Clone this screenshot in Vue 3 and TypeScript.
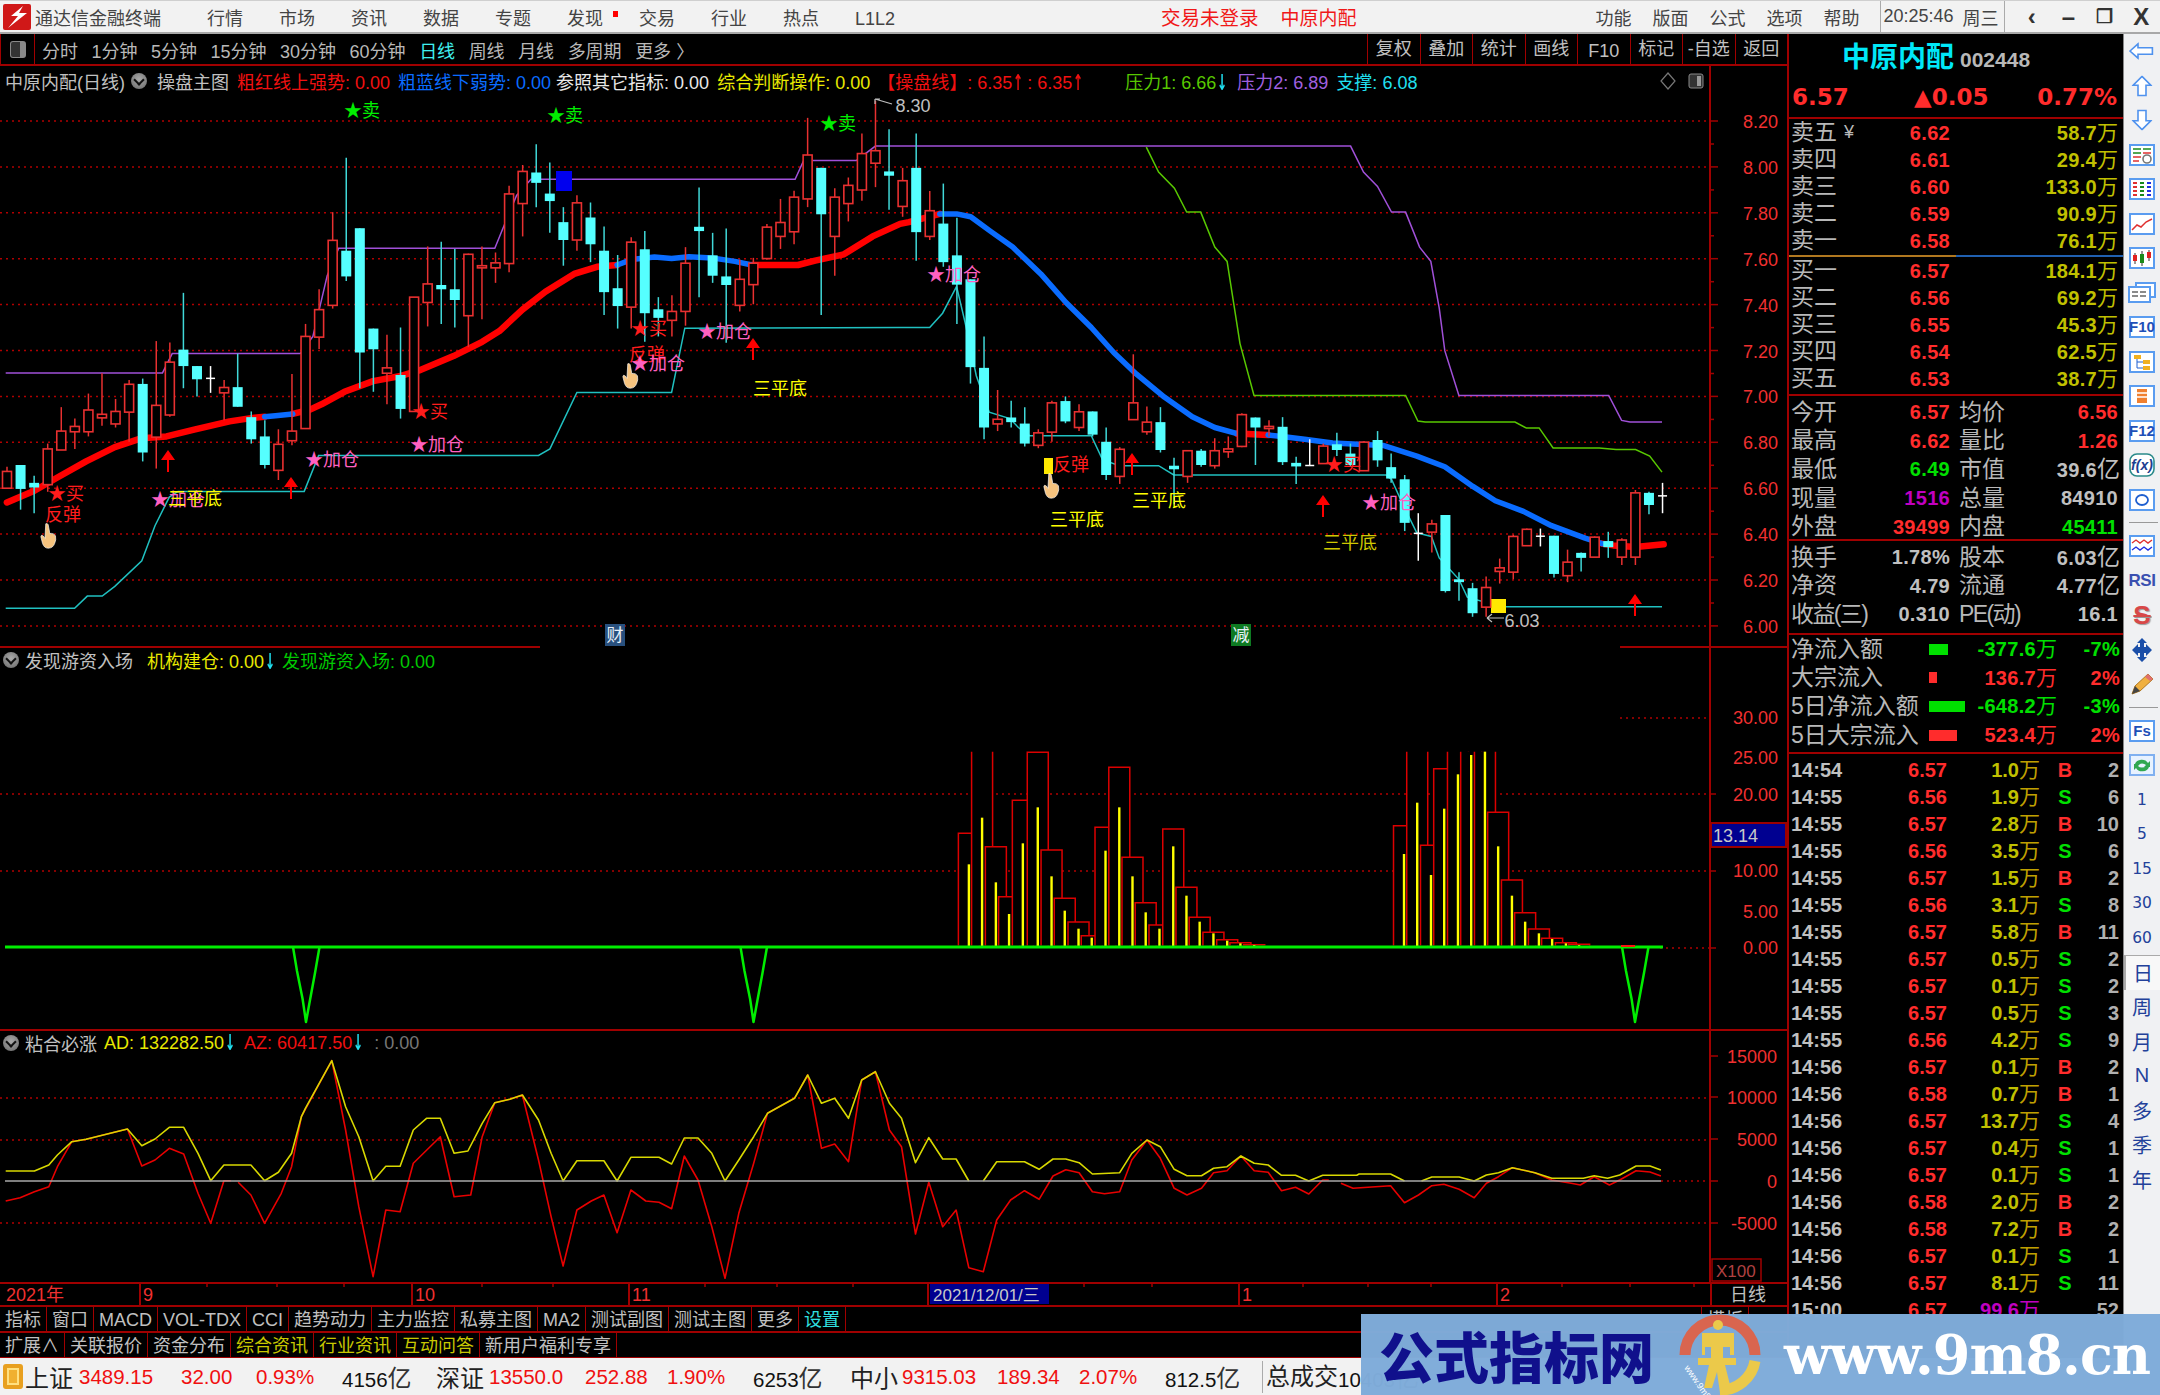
<script setup lang="ts">
// display coordinates read off two enlarged crops of the price chart
const pts6 = (...n: number[]) => pairs(n, (x, y) => [x / 1.742, 90 + y / 2.8])
const pts7 = (...n: number[]) => pairs(n, (x, y) => [850 + x / 1.782, 90 + y / 2.8])
const ptsA = (...n: number[]) => pairs(n, (x, y) => [x / 1.742, 1020 + y / 3])
const ptsB = (...n: number[]) => pairs(n, (x, y) => [850 + x / 1.65, 1020 + y / 3])

function pairs(n: number[], f: (x: number, y: number) => number[]) {
  const out: string[] = []
  for (let i = 0; i < n.length; i += 2) {
    const [x, y] = f(n[i], n[i + 1])
    out.push(`${x.toFixed(1)},${y.toFixed(1)}`)
  }
  return out.join(' ')
}

// kind (0 up, 1 down, 2 doji), high, body top, body bottom, low
const rawCandles = [
  [0,1055,1068,1115,1115],[1,1050,1050,1117,1175],[1,1080,1100,1113,1185],[0,990,1005,1105,1125],[0,888,955,1008,1008],
  [0,920,942,957,1005],[0,850,896,957,970],[0,793,908,918,940],[0,865,900,935,945],[0,812,824,902,985],
  [1,808,823,1015,1040],[0,703,883,972,1060],[0,707,762,910,915],[1,568,727,773,835],[1,773,773,810,858],
  [2,773,806,809,848],[0,812,833,848,925],[1,738,832,887,887],[1,900,916,978,990],[1,925,970,1050,1060],
  [0,950,992,1065,1092],[0,795,955,982,995],[0,655,690,948,948],[0,558,615,692,725],[0,342,421,603,612],
  [1,190,450,522,535],[1,387,387,735,835],[1,668,668,726,845],[0,685,778,793,880],[1,665,798,893,920],
  [0,580,580,900,900],[0,438,543,595,662],[1,425,546,558,655],[1,445,558,588,665],[0,458,460,632,720],
  [0,438,492,498,642],[0,455,484,498,540],[0,268,291,486,510],[0,210,228,318,410],[1,152,231,260,328],
  [1,203,290,311,400],[1,328,370,420,492],[0,295,316,420,450],[1,315,357,432,482],[1,382,450,566,630],
  [1,462,555,605,668],[0,412,426,608,668],[1,395,446,625,705],[1,580,614,638,690],[0,575,620,645,690],
  [0,440,485,620,660],[1,273,383,395,580],[1,400,463,520,540],[1,388,522,546,708],[0,475,530,603,620],
  [0,470,485,545,600],[0,375,384,472,475],[0,305,371,410,445],[0,282,300,397,432],[0,78,182,305,328],
  [1,218,218,348,630],[0,275,300,410,520],[0,245,267,318,368],[0,122,178,280,310],[0,30,170,205,272],
  [1,110,228,240,335],[0,218,254,326,355],[1,122,218,398,478],[0,283,338,410,420],[1,262,374,482,495],
  [1,358,463,545,655],[1,530,530,776,822],[1,690,778,945,978],[0,840,922,935,955],[1,870,917,930,945],
  [1,888,934,990,998],[0,950,960,995,1003],[0,870,876,958,985],[1,858,871,928,933],[0,880,901,945,955],
  [1,900,900,965,970],[1,945,985,1078,1092],[0,1000,1006,1082,1103],[0,740,876,923,923],[0,886,930,957,965],
  [1,888,930,1008,1015],[1,1030,1052,1062,1160],[0,1010,1010,1082,1100],[1,1005,1010,1050,1055],[0,975,1010,1052,1060],
  [0,970,1005,1013,1030],[0,905,909,998,1000],[1,917,917,945,1050],[0,925,942,948,970],[1,916,943,1042,1050],
  [1,1027,1044,1054,1103],[2,978,1050,1053,1053],[0,990,997,1046,1046],[1,960,992,1008,1025],[1,990,1018,1050,1055],
  [0,983,986,1066,1066],[1,955,980,1037,1055],[1,1018,1056,1088,1100],[1,1078,1090,1212,1235],[2,1185,1240,1244,1318],
  [0,1203,1215,1238,1295],[1,1190,1190,1403,1407],[1,1350,1370,1378,1430],[1,1380,1395,1465,1475],[0,1362,1393,1448,1475],
  [0,1312,1338,1348,1382],[0,1245,1250,1350,1370],[0,1228,1230,1276,1276],[2,1228,1248,1252,1278],[1,1248,1248,1355,1365],
  [0,1287,1322,1360,1378],[1,1295,1296,1310,1348],[0,1250,1252,1308,1308],[1,1237,1263,1280,1310],[0,1255,1260,1308,1330],
  [0,1120,1128,1308,1330],[1,1125,1128,1162,1188],[2,1100,1135,1138,1185],
]
const toY = (d: number) => 90 + d / 2.8
const candles = rawCandles.map((c, i) => ({
  x: 7 + 13.57 * i,
  kind: c[0],
  hi: toY(c[1]),
  top: toY(c[2]),
  bot: toY(c[3]),
  lo: toY(c[4]),
}))

const maRed = [
  pts6(12,1155,60,1122,100,1085,150,1040,200,1000,247,975,290,970,340,950,400,928,440,918,461,915),
  pts6(510,907,540,895,560,880,600,845,650,815,700,800,730,785,790,745,840,705,870,675,910,615,950,565,1000,515,1040,495,1075,490),
  pts6(1310,490,1330,490,1390,490,1420,478,1470,460,1520,410,1568,375) + ' ' + pts7(105,370,160,347),
  pts7(690,962,745,966),
  pts7(1340,1270,1360,1275,1400,1280,1450,1272),
]
const maBlue = [
  pts6(461,915,480,912,510,907),
  pts6(1075,490,1100,475,1140,468,1170,472,1200,467,1240,470,1280,480,1310,490),
  pts7(160,347,190,347,215,355,250,395,290,440,340,515,385,595,430,665,470,735,510,795,560,860,610,915,650,945,690,962),
  pts7(745,966,770,970,810,978,860,988,950,995,1010,1025,1060,1055,1110,1110,1150,1150,1200,1180,1250,1220,1310,1255,1340,1270),
]
const purple = [
  pts6(10,792,283,792,300,738,523,738,545,690,570,520,590,443,862,443,878,380,900,295,925,250,1385,250,1400,197,1492,197,1525,157,1568,157)
    + ' ' + pts7(892,157,915,230,940,270,965,342,990,342,1015,440,1035,480,1050,610,1060,730,1085,855,1352,855,1375,925,1390,930,1447,930),
]
const greenLine = pts7(528,160,550,230,578,275,600,342,625,342,650,440,672,480,685,610,695,710,720,855,990,855,1012,927,1025,930,1185,930,1205,946,1228,946,1253,1002,1335,1002,1365,1007,1400,1007,1425,1025,1447,1070)
const support = pts6(10,1451,130,1451,152,1417,178,1417,200,1390,247,1318,270,1220,295,1140,310,1124,530,1124,555,1023,938,1023,958,1005,1005,847,1170,847,1193,667,1568,665)
  + ' ' + pts7(142,665,165,625,190,550,205,650,225,800,248,902,285,920,300,945,320,968,430,968,450,1035,480,1052,550,1052,577,1078,955,1078,965,1090,985,1160,1010,1240,1036,1250,1050,1310,1085,1370,1100,1420,1160,1447,1447,1447)

const priceGrid = Array.from({ length: 12 }, (_, i) => ({ y: 121 + i * 45.9, t: (8.2 - i * 0.2).toFixed(2) }))

const RED = '#ff1c1c'
const GREEN = '#00ee00'
const PINK = '#ff60c0'
const YEL = '#ffff00'
const marks = [
  { x: 362, y: 111, t: '★卖', c: GREEN },
  { x: 565, y: 116, t: '★卖', c: GREEN },
  { x: 838, y: 124, t: '★卖', c: GREEN },
  { x: 66, y: 494, t: '★买', c: RED },
  { x: 430, y: 412, t: '★买', c: RED },
  { x: 649, y: 329, t: '★买', c: RED },
  { x: 1343, y: 465, t: '★买', c: RED },
  { x: 63, y: 515, t: '反弹', c: RED },
  { x: 647, y: 355, t: '反弹', c: RED },
  { x: 1071, y: 465, t: '反弹', c: RED },
  { x: 178, y: 500, t: '★加仓', c: PINK },
  { x: 332, y: 460, t: '★加仓', c: PINK },
  { x: 437, y: 445, t: '★加仓', c: PINK },
  { x: 658, y: 364, t: '★加仓', c: PINK },
  { x: 725, y: 332, t: '★加仓', c: PINK },
  { x: 954, y: 275, t: '★加仓', c: PINK },
  { x: 1389, y: 503, t: '★加仓', c: PINK },
  { x: 195, y: 499, t: '三平底', c: YEL },
  { x: 780, y: 389, t: '三平底', c: YEL },
  { x: 1159, y: 501, t: '三平底', c: YEL },
  { x: 1077, y: 520, t: '三平底', c: YEL },
  { x: 1350, y: 543, t: '三平底', c: '#d0c800' },
]
const arrows = [[168, 461], [291, 488], [753, 349], [1132, 464], [1323, 506], [1635, 605]]
const hands = [[49, 536], [631, 376], [1052, 486]]

// indicator bars: centre, hollow bar top, yellow bar top (crop display units)
const group1 = [
  [120,580,673],[143,0,533],[167,620,727],[190,770,822],[214,481,610],[240,337,502],[264,630,709],[287,775,812],
  [311,846,866],[334,887,893],[358,562,632],[382,382,502],[405,652,709],[428,788,817],[452,855,866],[476,567,619],
  [499,742,767],[522,832,845],[546,877,880],[570,899,902],[593,908,910],[617,914,915],
]
const group2 = [
  [878,557,642],[901,0,488],[925,616,705],[948,386,506],[972,0,403],[995,0,345],[1019,0,335],[1042,517,619],
  [1066,720,767],[1089,818,845],[1113,867,880],[1136,895,897],[1160,908,910],[1183,913,915],
]
const BASE = 945.5
const CLIP = 751.7
const hollow = [...group1, ...group2].map(([d, top, yt]) => {
  const cx = 900 + d / 1.742
  const clipped = top === 0
  const t = clipped ? CLIP : 640 + top / 3
  const l = cx - 10.5
  const r = cx + 10.5
  return {
    cx, l, t, w: r - l, h: BASE - t,
    d: `M${l} ${BASE}V${t}${clipped ? `M${r} ${t}` : `H${r}`}V${BASE}`,
    yt: 640 + yt / 3,
  }
})
const spike = (c: number) => `${c - 13},947 ${c - 9},971 ${c - 3.4},999 ${c},1022 ${c + 4},1000 ${c + 9},973 ${c + 13.5},947`
const spikes = [306, 753.5, 1635].map(spike)
const pane2Axis = [
  { y: 718, t: '30.00' }, { y: 758, t: '25.00' }, { y: 795, t: '20.00' },
  { y: 871, t: '10.00' }, { y: 912, t: '5.00' }, { y: 948, t: '0.00' },
]

const adLine = ptsA(10,453,60,453,85,435,100,405,125,365,150,358,222,327,247,377,270,357,295,322,320,322,345,400,367,482,390,435,437,435,461,482,485,457,508,400,525,290,532,265,578,122,602,260,625,350,650,483,672,439,697,439,720,330,743,295,767,295,791,400,815,393,840,310,862,248,888,238,910,225,938,300,960,400,981,483,1005,422,1052,422,1075,483,1099,412,1148,412,1170,432,1192,354,1216,354,1240,400,1263,483,1287,420,1313,350,1337,280,1384,235,1407,165,1431,250,1454,235,1478,295,1501,180,1525,155)
  + ' ' + ptsB(65,250,85,295,108,428,130,353,153,417,175,417,196,483)
const adLine2 = ptsB(220,483,242,425,288,425,312,448,335,417,356,417,378,428,400,462,445,458,465,400,490,360,512,380,535,448,556,467,580,467,600,445,622,440,645,408,667,430,690,435,712,466,735,466,757,483,780,466,836,466,840,462,892,462,915,483)
const adLine3 = ptsB(943,483,960,471,1005,471,1030,483,1050,465,1070,458,1093,443,1130,458,1158,475,1210,475,1228,467,1250,475,1270,465,1297,438,1320,438,1338,450)
const azLine = ptsA(10,543,35,533,60,515,85,500,100,440,125,365,150,358,222,327,247,438,270,420,295,385,320,402,345,520,367,610,390,482,402,482)
const azLine2 = ptsA(415,487,437,525,461,610,490,520,508,440,525,290,578,122,602,330,625,560,650,770,672,570,697,575,720,430,767,350,791,530,820,525,840,350,862,248,888,238,910,225,938,420,960,590,981,738,1005,570,1030,543,1052,525,1075,638,1099,510,1125,543,1148,547,1170,566,1192,408,1216,480,1240,620,1263,775,1287,580,1313,430,1337,280,1384,235,1407,165,1431,385,1454,372,1478,425,1501,180,1525,155)
  + ' ' + ptsB(65,330,85,380,108,642,130,487,153,620,175,570,196,743,220,755,242,600,265,540,288,512,312,538,335,468,356,449,378,458,400,515,420,521,445,515,465,420,490,360,512,415,535,505,556,525,580,505,600,458,622,452,645,408,667,452,690,457,712,512,735,502,757,522,780,480,790,480)
const azLine3 = ptsB(810,490,830,505,892,497,915,548,938,525,960,497,980,493,1005,508,1030,533,1050,490,1070,470,1093,443,1130,458,1158,480,1190,490,1205,495,1228,470,1253,495,1270,480,1297,452,1320,456,1338,468)
const pane3Grid = [1098, 1140, 1223]
const pane3Axis = [
  { y: 1057, t: '15000' }, { y: 1098, t: '10000' }, { y: 1140, t: '5000' }, { y: 1182, t: '0' }, { y: 1224, t: '-5000' },
]

const timeMarks = [{ x: 140, t: '9' }, { x: 412, t: '10' }, { x: 629, t: '11' }, { x: 1239, t: '1' }, { x: 1497, t: '2' }]
const timeTicks = [207, 277, 344, 482, 553, 705, 777, 853, 1084, 1152, 1303, 1368, 1431, 1562, 1630, 1694]

const menu = ['行情', '市场', '资讯', '数据', '专题', '发现', '交易', '行业', '热点', 'L1L2']
const cycles = ['分时', '1分钟', '5分钟', '15分钟', '30分钟', '60分钟', '日线', '周线', '月线', '多周期', '更多 〉']
const tools = ['复权', '叠加', '统计', '画线', 'F10', '标记', '-自选', '返回']
const tabs1 = ['指标', '窗口', 'MACD', 'VOL-TDX', 'CCI', '趋势动力', '主力监控', '私募主图', 'MA2', '测试副图', '测试主图', '更多', '设置']
const tabs2 = ['扩展∧', '关联报价', '资金分布', '综合资讯', '行业资讯', '互动问答', '新用户福利专享']

const sells = [['卖五', '6.62', '58.7'], ['卖四', '6.61', '29.4'], ['卖三', '6.60', '133.0'], ['卖二', '6.59', '90.9'], ['卖一', '6.58', '76.1']]
const buys = [['买一', '6.57', '184.1'], ['买二', '6.56', '69.2'], ['买三', '6.55', '45.3'], ['买四', '6.54', '62.5'], ['买五', '6.53', '38.7']]
const stats = [
  { a: '今开', v: '6.57', vc: 'red', b: '均价', w: '6.56', wc: 'red' },
  { a: '最高', v: '6.62', vc: 'red', b: '量比', w: '1.26', wc: 'red' },
  { a: '最低', v: '6.49', vc: 'grn', b: '市值', w: '39.6', wc: 'gry', unit: '亿' },
  { a: '现量', v: '1516', vc: 'mag', b: '总量', w: '84910', wc: 'gry' },
  { a: '外盘', v: '39499', vc: 'red', b: '内盘', w: '45411', wc: 'grn' },
]
const stats2 = [
  { a: '换手', v: '1.78%', b: '股本', w: '6.03', unit: '亿' },
  { a: '净资', v: '4.79', b: '流通', w: '4.77', unit: '亿' },
  { a: '收益(三)', v: '0.310', b: 'PE(动)', w: '16.1' },
]
const flows = [
  { a: '净流入额', w: 19, c: 'grn', v: '-377.6', p: '-7%' },
  { a: '大宗流入', w: 8, c: 'red', v: '136.7', p: '2%' },
  { a: '5日净流入额', w: 36, c: 'grn', v: '-648.2', p: '-3%' },
  { a: '5日大宗流入', w: 28, c: 'red', v: '523.4', p: '2%' },
]
const ticks = [
  ['14:54','6.57','1.0','B','2'],['14:55','6.56','1.9','S','6'],['14:55','6.57','2.8','B','10'],['14:55','6.56','3.5','S','6'],
  ['14:55','6.57','1.5','B','2'],['14:55','6.56','3.1','S','8'],['14:55','6.57','5.8','B','11'],['14:55','6.57','0.5','S','2'],
  ['14:55','6.57','0.1','S','2'],['14:55','6.57','0.5','S','3'],['14:55','6.56','4.2','S','9'],['14:56','6.57','0.1','B','2'],
  ['14:56','6.58','0.7','B','1'],['14:56','6.57','13.7','S','4'],['14:56','6.57','0.4','S','1'],['14:56','6.57','0.1','S','1'],
  ['14:56','6.58','2.0','B','2'],['14:56','6.58','7.2','B','2'],['14:56','6.57','0.1','S','1'],['14:56','6.57','8.1','S','11'],
  ['15:00','6.57','99.6','','52'],
]
const sideNums = ['1', '5', '15', '30', '60']
const sideCn = ['周', '月', 'N', '多', '季', '年']
</script>

<template>
  <div class="screen">
    <!-- title / menu bar -->
    <header class="topbar">
      <svg class="logo" width="28" height="26" viewBox="0 0 28 26">
        <rect width="28" height="26" rx="2" fill="#d01818" />
        <path d="M20 2 L8 12 L15 12 L5 24 L24 9 L16 9 Z" fill="#fff" />
      </svg>
      <span class="app-name">通达信金融终端</span>
      <nav class="menu">
        <span v-for="m in menu" :key="m" class="menu-item">{{ m }}<i v-if="m === '发现'" class="dot"></i></span>
      </nav>
      <span class="login">交易未登录</span>
      <span class="stock-red">中原内配</span>
      <nav class="menu-right">
        <span>功能</span><span>版面</span><span>公式</span><span>选项</span><span>帮助</span>
      </nav>
      <div class="clock"><span>20:25:46</span><span class="week">周三</span></div>
      <div class="win-btns"><span>‹</span><span>–</span><span class="restore">❐</span><span>X</span></div>
    </header>

    <div class="body">
      <section class="left">
        <div class="toolbar">
          <div class="tb-icon"><i></i></div>
          <div class="cycles">
            <span v-for="c in cycles" :key="c" :class="{ on: c === '日线' }">{{ c }}</span>
          </div>
          <div class="tools">
            <span v-for="t in tools" :key="t" :class="{ lat: t === 'F10' }">{{ t }}</span>
          </div>
        </div>

        <!-- price pane -->
        <div class="pane pane-main">
          <svg width="1787" height="582" viewBox="0 66 1787 582">
            <defs>
              <symbol id="hand" viewBox="0 0 22 32">
                <path d="M7 1 q2 -1 3 1 l2 11 q5 -1 7 3 q1 5 -1 9 q-2 6 -8 6 q-5 0 -7 -6 l-2 -8 q0 -3 3 -1 l2 3 z" fill="#f6c37e" stroke="#fff" stroke-width=".8" />
              </symbol>
            </defs>
            <g v-for="g in priceGrid" :key="g.t">
              <line x1="0" x2="1710" :y1="g.y" :y2="g.y" class="grid" />
              <line x1="1710" x2="1718" :y1="g.y" :y2="g.y" class="axis-tick" />
              <line v-if="g.t !== '6.00'" x1="1710" x2="1714" :y1="g.y + 23" :y2="g.y + 23" class="axis-tick" />
              <text x="1778" :y="g.y + 1" class="axis-txt">{{ g.t }}</text>
            </g>
            <line x1="1710" x2="1710" y1="66" y2="648" class="axis-line" />
            <line x1="0" x2="540" y1="647" y2="647" class="axis-line" />
            <line x1="1620" x2="1787" y1="647" y2="647" class="axis-line" />

            <polyline v-for="p in purple" :key="p" :points="p" class="thin" stroke="#a050d8" />
            <polyline :points="greenLine" class="thin" stroke="#58c800" />
            <polyline :points="support" class="thin" stroke="#20c0c0" />
            <polyline v-for="p in maRed" :key="p" :points="p" class="ma ma-red" />
            <polyline v-for="p in maBlue" :key="p" :points="p" class="ma ma-blue" />

            <rect x="556" y="171" width="16" height="20" fill="#0000ee" />
            <rect x="1044" y="458" width="9" height="16" fill="#ffe800" />
            <rect x="1491" y="599" width="15" height="14" fill="#ffe800" />

            <g v-for="(c, i) in candles" :key="i">
              <line :x1="c.x" :x2="c.x" :y1="c.hi" :y2="c.lo" class="wick" :class="['k' + c.kind]" />
              <rect v-if="c.kind === 0" :x="c.x - 4.5" :y="c.top" width="9" :height="c.bot - c.top" class="body-up" />
              <rect v-else-if="c.kind === 1" :x="c.x - 5" :y="c.top" width="10" :height="c.bot - c.top" class="body-down" />
              <line v-else :x1="c.x - 4.5" :x2="c.x + 4.5" :y1="c.top + 0.5" :y2="c.top + 0.5" stroke="#fff" stroke-width="1.5" />
            </g>

            <text v-for="(m, i) in marks" :key="i" :x="m.x" :y="m.y" class="mark" :fill="m.c">{{ m.t }}</text>
            <path v-for="a in arrows" :key="a[0]" :d="`M${a[0]} ${a[1] - 11} l7 10 h-6 v12 h-2 v-12 h-6 z`" fill="#ff0000" />
            <use v-for="h in hands" :key="h[0]" href="#hand" :x="h[0] - 9" :y="h[1] - 13" width="18" height="26" />

            <path d="M892 104 L875 99 M875 99 v5 M875 99 h5" stroke="#c0c0c0" stroke-width="1.2" fill="none" />
            <text x="913" y="106" class="note">8.30</text>
            <path d="M1504 618 H1487 M1487 618 l5 -4 M1487 618 l5 4" stroke="#c0c0c0" stroke-width="1.2" fill="none" />
            <text x="1522" y="621" class="note">6.03</text>

            <rect x="605" y="624" width="20" height="22" fill="#28507e" />
            <text x="615" y="635" class="chip">财</text>
            <rect x="1231" y="624" width="20" height="22" fill="#0e7a22" />
            <text x="1241" y="635" class="chip">减</text>
          </svg>

          <div class="pane-head">
            <span class="gry">中原内配(日线)</span>
            <i class="ball"></i>
            <span class="gry">操盘主图</span>
            <span class="h-red">粗红线上强势: 0.00</span>
            <span class="h-blue">粗蓝线下弱势: 0.00</span>
            <span class="h-white s0">参照其它指标: 0.00</span>
            <span class="h-yel">综合判断操作: 0.00</span>
            <span class="h-red s7">【操盘线】: 6.35<b class="ar">↑</b> : 6.35<b class="ar">↑</b></span>
            <span class="h-lime s1">压力1: 6.66<b class="ar h-cyan">↓</b></span>
            <span class="h-pur s8">压力2: 6.89</span>
            <span class="h-cyan">支撑: 6.08</span>
            <svg class="mini" width="46" height="20" viewBox="0 0 46 20">
              <path d="M8 2 L15 10 L8 18 L1 10 Z" fill="none" stroke="#777" stroke-width="1.2" />
              <rect x="29" y="3" width="14" height="14" rx="2" fill="#333" stroke="#888" />
              <rect x="37" y="5" width="4" height="10" fill="#999" />
            </svg>
          </div>
        </div>

        <!-- funds pane -->
        <div class="pane pane-two">
          <svg width="1787" height="383" viewBox="0 648 1787 383">
            <line x1="1620" x2="1710" y1="718" y2="718" class="grid" />
            <line x1="0" x2="1710" y1="794" y2="794" class="grid" />
            <line x1="0" x2="1710" y1="871" y2="871" class="grid" />
            <line x1="1660" x2="1710" y1="948" y2="948" class="grid" />
            <g v-for="b in hollow" :key="b.cx">
              <rect :x="b.l" :y="b.t" :width="b.w" :height="b.h" fill="#000" />
              <path :d="b.d" fill="none" stroke="#dc0000" stroke-width="1.5" />
            </g>
            <line v-for="b in hollow" :key="b.cx" :x1="b.cx" :x2="b.cx" :y1="b.yt" y2="946" stroke="#ffff00" stroke-width="2.4" />
            <line x1="5" x2="1663" y1="947" y2="947" stroke="#00ee00" stroke-width="3" />
            <line x1="1621" x2="1635" y1="946" y2="946" stroke="#ff1010" stroke-width="2" />
            <polyline v-for="s in spikes" :key="s" :points="s" class="spike" />
            <g v-for="a in pane2Axis" :key="a.t">
              <text x="1778" :y="a.y" class="axis-txt">{{ a.t }}</text>
            </g>
            <line x1="1710" x2="1716" y1="794" y2="794" class="axis-tick" />
            <line x1="1710" x2="1716" y1="871" y2="871" class="axis-tick" />
            <line x1="1710" x2="1716" y1="948" y2="948" class="axis-tick" />
            <rect x="1711" y="823" width="75" height="24" fill="#000090" stroke="#9a0000" stroke-width="2" />
            <text x="1713" y="836" class="box-txt">13.14</text>
            <line x1="1710" x2="1710" y1="648" y2="1031" class="axis-line" />
            <line x1="0" x2="1787" y1="1030" y2="1030" class="axis-line" />
          </svg>
          <div class="pane-head head-sub">
            <i class="ball"></i>
            <span class="gry">发现游资入场</span>
            <span class="h-yel s2">机构建仓: 0.00<b class="ar h-cyan">↓</b></span>
            <span class="h-grn s3">发现游资入场: 0.00</span>
          </div>
        </div>

        <!-- oscillator pane -->
        <div class="pane pane-three">
          <svg width="1787" height="251" viewBox="0 1031 1787 251">
            <line v-for="y in pane3Grid" :key="y" x1="0" x2="1710" :y1="y" :y2="y" class="grid" />
            <line x1="1661" x2="1710" y1="1181" y2="1181" class="grid" />
            <polyline :points="azLine" class="osc" stroke="#e80000" />
            <polyline :points="azLine2" class="osc" stroke="#e80000" />
            <polyline :points="azLine3" class="osc" stroke="#e80000" />
            <polyline :points="adLine" class="osc" stroke="#d8d800" />
            <polyline :points="adLine2" class="osc" stroke="#d8d800" />
            <polyline :points="adLine3" class="osc" stroke="#d8d800" />
            <line x1="5" x2="1661" y1="1181" y2="1181" stroke="#a8a8a8" stroke-width="1.6" />
            <g v-for="a in pane3Axis" :key="a.t">
              <text x="1777" :y="a.y" class="axis-txt">{{ a.t }}</text>
              <line x1="1710" x2="1718" :y1="a.y - 1" :y2="a.y - 1" class="axis-tick" />
            </g>
            <rect x="1712" y="1259" width="49" height="22" fill="none" stroke="#a00000" stroke-width="1.5" />
            <text x="1716" y="1271" class="x100">X100</text>
            <line x1="1710" x2="1710" y1="1031" y2="1282" class="axis-line" />
          </svg>
          <div class="pane-head head-sub">
            <i class="ball"></i>
            <span class="gry">粘合必涨</span>
            <span class="h-yel s4">AD: 132282.50<b class="ar h-cyan">↓</b></span>
            <span class="h-red s5">AZ: 60417.50<b class="ar h-cyan">↓</b></span>
            <span class="h-dim s6">: 0.00</span>
          </div>
        </div>

        <!-- date axis -->
        <svg class="time-axis" width="1787" height="23" viewBox="0 1282 1787 23">
          <rect x="0" y="1282" width="1787" height="23" fill="#000" />
          <line x1="0" x2="1787" y1="1283" y2="1283" class="axis-line" />
          <text x="6" y="1295" class="time-txt">2021年</text>
          <g v-for="m in timeMarks" :key="m.x">
            <line :x1="m.x" :x2="m.x" y1="1283" y2="1305" class="axis-line" />
            <text :x="m.x + 3" y="1295" class="time-txt">{{ m.t }}</text>
          </g>
          <line v-for="t in timeTicks" :key="t" :x1="t" :x2="t" y1="1283" y2="1287" class="axis-tick" />
          <line x1="928" x2="928" y1="1283" y2="1305" class="axis-line" />
          <rect x="930" y="1284" width="119" height="20" fill="#000090" />
          <text x="933" y="1295" class="date-txt">2021/12/01/三</text>
          <line x1="1711" x2="1711" y1="1283" y2="1305" class="axis-line" />
          <text x="1748" y="1295" class="daily">日线</text>
        </svg>

        <div class="tabs">
          <span v-for="t in tabs1" :key="t" :class="{ cy: t === '设置' }">{{ t }}</span>
          <span class="tpl">模板</span>
        </div>
        <div class="tabs tabs-two">
          <span v-for="t in tabs2" :key="t" :class="{ yl: ['综合资讯', '行业资讯', '互动问答'].includes(t) }">{{ t }}</span>
        </div>
      </section>

      <!-- quote panel -->
      <aside class="panel">
        <div class="sec sec-title">
          <div class="name-row">
            <span class="name">中原内配</span><span class="code">002448</span>
          </div>
          <div class="price-row">
            <span>6.57</span><span>▲0.05</span><span>0.77%</span>
          </div>
        </div>
        <div class="sec sec-sell">
          <div v-for="(r, i) in sells" :key="r[0]" class="q-row">
            <span class="lb">{{ r[0] }}<em v-if="i === 0" class="yen">¥</em></span>
            <b class="red num">{{ r[1] }}</b>
            <b class="vol num">{{ r[2] }}<em>万</em></b>
          </div>
        </div>
        <div class="sec sec-buy">
          <div v-for="r in buys" :key="r[0]" class="q-row">
            <span class="lb">{{ r[0] }}</span>
            <b class="red num">{{ r[1] }}</b>
            <b class="vol num">{{ r[2] }}<em>万</em></b>
          </div>
        </div>
        <div class="sec sec-stat">
          <div v-for="s in stats" :key="s.a" class="s-row">
            <span class="lb">{{ s.a }}</span>
            <b class="num" :class="s.vc">{{ s.v }}</b>
            <span class="lb l2">{{ s.b }}</span>
            <b class="num" :class="s.wc">{{ s.w }}<em v-if="s.unit" class="u">{{ s.unit }}</em></b>
          </div>
        </div>
        <div class="sec sec-stat2">
          <div v-for="s in stats2" :key="s.a" class="s-row">
            <span class="lb" :class="{ tight: s.a.length > 2 }">{{ s.a }}</span>
            <b class="num gry">{{ s.v }}</b>
            <span class="lb l2" :class="{ tight: s.b.length > 2 }">{{ s.b }}</span>
            <b class="num gry">{{ s.w }}<em v-if="s.unit" class="u">{{ s.unit }}</em></b>
          </div>
        </div>
        <div class="sec sec-flow">
          <div v-for="f in flows" :key="f.a" class="f-row">
            <span class="lb">{{ f.a }}</span>
            <div class="f-val">
              <i class="f-bar" :class="'bg-' + f.c" :style="{ width: f.w + 'px' }"></i>
              <b class="num" :class="f.c">{{ f.v }}<em class="u2">万</em></b>
            </div>
            <b class="num" :class="f.c">{{ f.p }}</b>
          </div>
        </div>
        <div class="sec-ticks">
          <div v-for="(t, i) in ticks" :key="i" class="t-row">
            <b class="t-time">{{ t[0] }}</b>
            <b class="red t-num">{{ t[1] }}</b>
            <b class="t-num" :class="t[0] === '15:00' ? 'mag' : 'vol'">{{ t[2] }}<em :class="t[0] === '15:00' ? 'u3' : 'u4'">万</em></b>
            <b class="t-bs" :class="t[3] === 'B' ? 'red' : 'grn'">{{ t[3] }}</b>
            <span class="t-cnt">{{ t[4] }}</span>
          </div>
        </div>
      </aside>

      <!-- tool strip -->
      <aside class="strip">
        <div class="s-item"><svg class="ar-ic" width="34" height="22" viewBox="0 0 34 22"><path d="M2 11 L12 2 V7 H30 V15 H12 V20 Z" class="arrow-ic" /></svg></div>
        <div class="s-item"><svg class="ar-ic" width="26" height="26" viewBox="0 0 26 26"><path d="M13 1 L24 12 H18 V25 H8 V12 H2 Z" class="arrow-ic" /></svg></div>
        <div class="s-item"><svg class="ar-ic" width="26" height="26" viewBox="0 0 26 26"><path d="M13 25 L24 14 H18 V1 H8 V14 H2 Z" class="arrow-ic" /></svg></div>
        <div class="s-item"><svg width="26" height="22" viewBox="0 0 26 22"><rect x="1" y="1" width="24" height="20" class="ic-box" /><path d="M4 5h8M14 5h8M4 9h8" stroke="#1a8a1a" stroke-width="1.6" /><path d="M14 9h8M4 13h8M4 17h6" stroke="#e03030" stroke-width="1.6" /><circle cx="18" cy="15" r="4" fill="none" stroke="#777" stroke-width="1.6" /></svg></div>
        <div class="s-item"><svg width="26" height="22" viewBox="0 0 26 22"><rect x="1" y="1" width="24" height="20" class="ic-box" /><path d="M4 5h4M4 9h4M4 13h4M4 17h4" stroke="#e03030" stroke-width="2" /><path d="M11 5h4M11 9h4M11 13h4M11 17h4" stroke="#1a8a1a" stroke-width="2" /><path d="M18 5h4M18 9h4M18 13h4M18 17h4" stroke="#2030e0" stroke-width="2" /></svg></div>
        <div class="s-item"><svg width="26" height="22" viewBox="0 0 26 22"><rect x="1" y="1" width="24" height="20" class="ic-box" /><path d="M3 17 L8 12 L12 14 L17 9 L23 6" fill="none" stroke="#e03030" stroke-width="1.5" /></svg></div>
        <div class="s-item"><svg width="26" height="22" viewBox="0 0 26 22"><rect x="1" y="1" width="24" height="20" class="ic-box" /><path d="M6 6v11M13 4v15M20 3v11" stroke="#333" /><rect x="4" y="8" width="4" height="6" fill="#e02020" /><rect x="11" y="7" width="4" height="9" fill="#1a8a1a" /><rect x="18" y="5" width="4" height="6" fill="#e02020" /></svg></div>
        <div class="s-item"><svg width="28" height="22" viewBox="0 0 28 22"><rect x="8" y="1" width="19" height="14" class="ic-box" /><rect x="1" y="5" width="21" height="15" class="ic-box" /><path d="M4 10h6M12 10h6M4 14h6M12 14h6" stroke="#666" stroke-width="1.6" /></svg></div>
        <div class="s-item"><svg width="26" height="22" viewBox="0 0 26 22"><rect x="1" y="1" width="24" height="20" class="ic-box" /><text x="13" y="16" class="ic-txt">F10</text></svg></div>
        <div class="s-item"><svg width="26" height="22" viewBox="0 0 26 22"><rect x="1" y="1" width="24" height="20" class="ic-box" /><rect x="5" y="4" width="7" height="4" fill="#f0b020" /><rect x="14" y="9" width="7" height="4" fill="#f0b020" /><rect x="14" y="15" width="7" height="4" fill="#f0b020" /><path d="M8 8v9h6M8 11h6" fill="none" stroke="#2060d0" /></svg></div>
        <div class="s-item"><svg width="26" height="22" viewBox="0 0 26 22"><rect x="1" y="1" width="24" height="20" class="ic-box" /><rect x="8" y="4" width="10" height="14" fill="#f08030" /><path d="M8 8h10M8 12h10" stroke="#fff" stroke-width="1.5" /></svg></div>
        <div class="s-item"><svg width="26" height="22" viewBox="0 0 26 22"><rect x="1" y="1" width="24" height="20" class="ic-box" /><text x="13" y="16" class="ic-txt">F12</text></svg></div>
        <div class="s-item"><svg width="26" height="24" viewBox="0 0 26 24"><rect x="1" y="1" width="24" height="22" rx="7" fill="#fff" stroke="#2a8a8a" stroke-width="1.6" /><text x="13" y="17" class="ic-fx">f(x)</text></svg></div>
        <div class="s-item"><svg width="26" height="22" viewBox="0 0 26 22"><rect x="1" y="1" width="24" height="20" class="ic-box" /><ellipse cx="13" cy="11" rx="6" ry="5" fill="none" stroke="#2060d0" stroke-width="1.8" /></svg></div>
        <div class="s-sep"></div>
        <div class="s-item"><svg width="26" height="22" viewBox="0 0 26 22"><rect x="1" y="1" width="24" height="20" class="ic-box" /><path d="M3 8l4 -3 4 3 4 -3 4 3 4 -3" fill="none" stroke="#e03030" stroke-width="1.4" /><path d="M3 15l4 -3 4 3 4 -3 4 3 4 -3" fill="none" stroke="#2030e0" stroke-width="1.4" /></svg></div>
        <div class="s-item"><span class="s-rsi">RSI</span></div>
        <div class="s-item"><span class="s-dollar">S</span></div>
        <div class="s-item"><svg width="28" height="26" viewBox="0 0 28 26"><path d="M14 1 L19 6 H16 V10 H18 V7 L24 13 L18 19 V16 H16 V20 H19 L14 25 L9 20 H12 V16 H10 V19 L4 13 L10 7 V10 H12 V6 H9 Z" fill="#1a4ea8" /></svg></div>
        <div class="s-item"><svg width="26" height="26" viewBox="0 0 26 26"><path d="M3 23 L6 15 L19 3 L24 8 L11 20 Z" fill="#f0b040" stroke="#b07820" /><path d="M19 3 L24 8 L21 10 L16 6 Z" fill="#e07070" /><path d="M3 23 L6 15 L11 20 Z" fill="#444" /></svg></div>
        <div class="s-sep"></div>
        <div class="s-item"><svg width="26" height="22" viewBox="0 0 26 22"><rect x="1" y="1" width="24" height="20" class="ic-box" /><text x="13" y="16" class="ic-txt">Fs</text></svg></div>
        <div class="s-item"><svg width="26" height="22" viewBox="0 0 26 22"><rect x="1" y="1" width="24" height="20" fill="#e8f2ff" stroke="#80b0f0" stroke-width="2" /><path d="M6 10 a7 6 0 0 1 13 -1 l2 -2 v6 h-6 l2 -2 a5 4 0 0 0 -8 0 Z M20 13 a7 6 0 0 1 -13 1 l-2 2 v-6 h6 l-2 2 a5 4 0 0 0 8 0 Z" fill="#30a850" /></svg></div>
        <div v-for="n in sideNums" :key="n" class="s-item s-num">{{ n }}</div>
        <div class="s-item s-cn s-day">日</div>
        <div v-for="c in sideCn" :key="c" class="s-item s-cn">{{ c }}</div>
      </aside>
    </div>

    <footer class="status">
      <i class="st-icon"></i>
      <span class="st-cn">上证</span><span class="st-r">3489.15</span><span class="st-r">32.00</span><span class="st-r">0.93%</span><span class="st-k">4156<em>亿</em></span>
      <span class="st-cn">深证</span><span class="st-r">13550.0</span><span class="st-r">252.88</span><span class="st-r">1.90%</span><span class="st-k">6253<em>亿</em></span>
      <span class="st-cn">中小</span><span class="st-r">9315.03</span><span class="st-r">189.34</span><span class="st-r">2.07%</span><span class="st-k">812.5<em>亿</em></span>
      <span class="st-cn st-total">总成交</span><span class="st-k">10403<em>亿</em></span>
    </footer>

    <!-- site watermark laid over the corner of the window -->
    <div class="watermark">
      <span class="wm-cn">公式指标网</span>
      <svg class="wm-logo" width="84" height="82" viewBox="0 0 84 82">
        <path d="M7 41 A35 35 0 0 1 77 41" fill="none" stroke="#d9654f" stroke-width="11" />
        <path d="M77 47 A35 35 0 0 1 42 76" fill="none" stroke="#ebc94a" stroke-width="11" />
        <circle cx="40" cy="11" r="5" fill="#ebc94a" />
        <path d="M24 19 H56 V41 H52 V33 H45 V44 H58 V51 H47 L54 79 H42 L39 58 L34 74 H26 L31 51 H20 V44 H33 V33 H27 V41 H24 Z" fill="#ebc94a" />
        <text x="6" y="54" class="wm-tiny" transform="rotate(55 6 54)">www.9m8.cn</text>
      </svg>
      <span class="wm-url">www.9m8.cn</span>
    </div>
  </div>
</template>

<style>
html, body { margin: 0; padding: 0; background: #000; }
</style>

<style scoped>
.screen {
  position: relative;
  width: 2160px;
  height: 1395px;
  overflow: hidden;
  background: #000;
  font-family: "Liberation Sans", "Noto Sans CJK SC", sans-serif;
  font-size: 18px;
  color: #c0c0c0;
  display: flex;
  flex-direction: column;
}
i, em, b { font-style: normal; }

/* top bar */
.topbar {
  height: 34px;
  flex: none;
  box-sizing: border-box;
  background: #f2f2f2;
  border-top: 1px solid #cfcfcf;
  border-bottom: 2px solid #a8a8a8;
  color: #444;
  display: flex;
  align-items: center;
  padding-left: 3px;
}
.logo { flex: none; }
.app-name { margin-left: 4px; width: 126px; white-space: nowrap; }
.menu { display: flex; align-items: baseline; gap: 36px; margin-left: 46px; width: 700px; }
.menu-item { position: relative; width: 36px; white-space: nowrap; }
.dot { position: absolute; left: 46px; top: 7px; width: 5px; height: 6px; background: #f00; }
.login { color: #f01818; font-size: 19.5px; margin-left: 254px; }
.stock-red { color: #f01818; font-size: 19px; margin-left: 22px; }
.menu-right { display: flex; gap: 21px; margin-left: 239px; }
.clock {
  display: flex;
  align-items: center;
  gap: 9px;
  height: 100%;
  margin-left: 20px;
  padding: 0 5px 0 3px;
  border-left: 1px solid #aaa;
  border-right: 1px solid #aaa;
}
.week { width: 36px; }
.win-btns { display: flex; margin-left: 9px; gap: 0; color: #333; font-weight: bold; font-size: 24px; }
.win-btns span { width: 36.5px; text-align: center; line-height: 28px; }
.win-btns .restore { font-size: 19px; }

/* left side */
.body { flex: none; height: 1324px; display: flex; }
.left { width: 1787px; flex: none; }
.toolbar {
  height: 32px;
  box-sizing: border-box;
  border-bottom: 2px solid #a00000;
  display: flex;
  align-items: center;
}
.tb-icon {
  width: 35px;
  height: 100%;
  box-sizing: border-box;
  border-right: 1px solid #a00000;
  border-left: 1px solid #a00000;
  display: flex;
  align-items: center;
  justify-content: center;
}
.tb-icon i {
  width: 16px;
  height: 17px;
  box-sizing: border-box;
  border: 1px solid #888;
  border-radius: 3px;
  background: #333;
  border-right: 6px solid #888;
}
.cycles { display: flex; gap: 13.5px; margin-left: 7px; padding-top: 1px; color: #b8b8b8; }
.cycles span { white-space: nowrap; }
.cycles .on { color: #40f0f0; }
.tools { display: flex; margin-left: auto; height: 100%; color: #c0c0c0; }
.tools span {
  width: 52.5px;
  box-sizing: border-box;
  border-left: 1px solid #a00000;
  text-align: center;
  line-height: 31px;
  white-space: nowrap;
}
.tools .lat { line-height: 35px; }

/* panes */
.pane { position: relative; }
.pane svg { display: block; }
.pane-main { height: 582px; }
.pane-two { height: 383px; }
.pane-three { height: 251px; }
.pane-head {
  position: absolute;
  left: 0;
  top: 2px;
  height: 26px;
  display: flex;
  align-items: center;
  white-space: nowrap;
  padding-left: 5px;
  width: 1700px;
  box-sizing: border-box;
}
.pane-head > span { margin-left: 8px; }
.pane-head > span:first-child { margin-left: 0; }
.pane-head .ball + span { margin-left: 10px; }
.head-sub { padding-left: 3px; top: -1px; }
.head-sub .ball + span { margin-left: 6px; }
.ball {
  flex: none;
  width: 16px;
  height: 16px;
  margin-left: 6px;
  border-radius: 50%;
  background: radial-gradient(circle at 50% 40%, #aaa, #666);
  position: relative;
}
.head-sub .ball { margin-left: 0; }
.ball::after {
  content: "";
  position: absolute;
  left: 4px;
  top: 3px;
  width: 6px;
  height: 6px;
  border-right: 2px solid #111;
  border-bottom: 2px solid #111;
  transform: rotate(45deg);
}
.gry { color: #c0c0c0; }
.h-red { color: #f01010; }
.h-blue { color: #0a6cff; }
.h-white { color: #e8e8e8; }
.h-yel { color: #e8e800; }
.h-lime { color: #58c800; }
.h-pur { color: #a060e0; }
.h-cyan { color: #20e0f0; }
.h-grn { color: #00c800; }
.h-dim { color: #777; }
.ar {
  display: inline-block;
  width: 9px;
  font: bold 22px/18px "DejaVu Sans", sans-serif;
  transform: scaleX(.55);
  transform-origin: left center;
  vertical-align: -1px;
  margin-left: 1px;
}
.pane-head .s0 { margin-left: 5px; }
.pane-head .s7 { margin-left: 7px; }
.pane-head .s1 { margin-left: 43px; }
.pane-head .s8 { margin-left: 11px; }
.pane-head .s2 { margin-left: 14px; }
.pane-head .s3 { margin-left: 8px; }
.pane-head .s4 { margin-left: 7px; }
.pane-head .s5 { margin-left: 10px; }
.pane-head .s6 { margin-left: 12px; }
.mini { position: absolute; left: 1660px; top: 3px; }

.grid { stroke: #b00000; stroke-width: 1.5; stroke-dasharray: 2 4; }
.axis-line { stroke: #a00000; stroke-width: 2; }
.axis-tick { stroke: #a00000; stroke-width: 1.5; }
.axis-txt { fill: #f03030; font-size: 18px; text-anchor: end; dominant-baseline: central; }
.box-txt { fill: #c8c8c8; font-size: 18px; dominant-baseline: central; }
.x100 { fill: #b04040; font-size: 17px; dominant-baseline: central; }
.thin { fill: none; stroke-width: 1.5; }
.ma { fill: none; stroke-linejoin: round; stroke-linecap: round; }
.ma-red { stroke: #ff0000; stroke-width: 6.5; }
.ma-blue { stroke: #0a6cff; stroke-width: 5.5; }
.wick { stroke-width: 1.5; }
.k0 { stroke: #e83030; }
.k1 { stroke: #40d8d8; }
.k2 { stroke: #fff; }
.body-up { fill: #000; stroke: #e83030; stroke-width: 1.6; }
.body-down { fill: #55ffff; }
.mark { font-size: 18px; text-anchor: middle; dominant-baseline: central; }
.note { fill: #c0c0c0; font-size: 18px; text-anchor: middle; dominant-baseline: central; }
.chip { fill: #e8f0f8; font-size: 17px; text-anchor: middle; dominant-baseline: central; }
.spike { fill: none; stroke: #00ee00; stroke-width: 2.5; stroke-linejoin: round; }
.osc { fill: none; stroke-width: 1.6; stroke-linejoin: round; }

.time-axis { display: block; }
.time-txt { fill: #f03030; font-size: 18px; dominant-baseline: central; }
.date-txt { fill: #c8c8c8; font-size: 17px; dominant-baseline: central; }
.daily { fill: #c0c0c0; font-size: 18px; text-anchor: middle; dominant-baseline: central; }

.tabs {
  height: 26px;
  box-sizing: border-box;
  border-top: 2px solid #a00000;
  display: flex;
  color: #c0c0c0;
  line-height: 26px;
}
.tabs span {
  padding: 0 5px;
  border-right: 1px solid #a00000;
  white-space: nowrap;
}
.tabs .cy { color: #30e0e0; }
.tabs .yl { color: #c8c800; }
.tabs .tpl { margin-left: auto; margin-right: 38px; padding: 0; width: 46px; border-left: 1px solid #a00000; text-align: center; }
.tabs-two { height: 28px; border-bottom: 2px solid #a00000; line-height: 27px; }

/* quote panel */
.panel {
  width: 336px;
  flex: none;
  box-sizing: border-box;
  border-left: 2px solid #a00000;
  overflow: hidden;
  height: 1324px;
}
.sec { border-bottom: 2px solid #a00000; box-sizing: border-box; }
.sec-title { height: 85px; position: relative; }
.name-row { display: flex; align-items: baseline; padding: 1px 0 0 53px; height: 38px; box-sizing: border-box; }
.name { color: #00e8f8; font-size: 28px; font-weight: bold; }
.code { color: #b8b8b8; font-size: 21px; font-weight: bold; margin-left: 6px; }
.price-row {
  display: grid;
  grid-template-columns: 122px 114px 89px;
  padding-left: 3px;
  margin-top: 12px;
  font: bold 23px/26px "DejaVu Sans", sans-serif;
  color: #ff2c2c;
}
.price-row span:last-child { text-align: right; }
.sec-sell { height: 138px; padding-top: 0; border-bottom-width: 0; position: relative; }
.sec-sell::after {
  content: "";
  position: absolute;
  left: 0;
  right: 0;
  bottom: 0;
  height: 2px;
  background: linear-gradient(90deg, #b07820 50%, #2060b0 50%);
}
.sec-buy { height: 139px; padding-top: 0; }
.q-row { display: grid; grid-template-columns: 100px 59px 168px; height: 27px; align-items: center; padding-left: 2px; }
.lb { font-size: 23px; color: #b8b8b8; white-space: nowrap; line-height: 27px; position: relative; }
.tight { letter-spacing: -1.6px; }
.yen { position: absolute; left: 53px; top: 0; font-size: 18px; font-family: "Liberation Sans", sans-serif; }
.num { font-size: 20px; line-height: 20px; text-align: right; white-space: nowrap; letter-spacing: .3px; }
.num em { font-weight: normal; font-size: 21px; letter-spacing: 0; }
.red { color: #ff2c2c; }
.grn { color: #00e000; }
.mag { color: #c000c0; }
.gry { color: #c0c0c0; }
.vol { color: #c0c000; }
.sec-stat { height: 145px; padding-top: 2px; }
.sec-stat2 { height: 94px; padding-top: 2px; }
.s-row { display: grid; grid-template-columns: 60px 99px 9px 60px 99px; height: 28.6px; align-items: center; padding-left: 2px; }
.s-row .l2 { grid-column: 4; }
.u { color: #c0c0c0; font-size: 23px !important; margin-right: -2px; }
.sec-flow { height: 119px; }
.f-row { display: grid; grid-template-columns: 138px 128px 63px; height: 28.6px; align-items: center; padding-left: 2px; }
.f-val { display: flex; align-items: center; justify-content: space-between; }
.f-bar { display: block; height: 11px; }
.bg-grn { background: #00e000; }
.bg-red { background: #ff2c2c; }
.u2 { font-size: 21px; }
.sec-ticks { padding-top: 2px; }
.t-row { display: grid; grid-template-columns: 60px 96px 93px 50px 29px; height: 27px; align-items: center; padding-left: 2px; }
.t-time { font-size: 20px; line-height: 20px; color: #c0c0c0; }
.t-num { font-size: 20px; line-height: 20px; text-align: right; white-space: nowrap; }
.t-num em { font-weight: normal; font-size: 21px; }
.u3 { color: #c000c0; }
.u4 { color: #c0a000; }
.t-bs { font-size: 20px; line-height: 20px; text-align: center; }
.t-cnt { font-size: 20px; line-height: 20px; text-align: right; color: #b0b0b0; font-weight: bold; }

/* right strip */
.strip {
  width: 37px;
  flex: none;
  background: #f0f1f3;
  border-left: 1px solid #888;
  box-sizing: border-box;
  display: flex;
  flex-direction: column;
  color: #23419a;
}
.s-item {
  height: 34.5px;
  flex: none;
  display: flex;
  align-items: center;
  justify-content: center;
}
.s-sep { height: 12px; flex: none; position: relative; }
.s-sep::after { content: ""; position: absolute; left: 5px; right: 2px; top: 5px; height: 1px; background: #999; }
.arrow-ic { fill: #fff; stroke: #4f92ee; stroke-width: 2; }
.ar-ic { transform: scale(.8); }
.ic-box { fill: #fff; stroke: #5a9cf0; stroke-width: 2; }
.ic-txt { font-size: 15px; fill: #1e50b8; text-anchor: middle; font-weight: bold; }
.ic-fx { font-size: 14px; fill: #1e3f90; text-anchor: middle; font-style: italic; font-weight: bold; }
.s-rsi { font-weight: bold; font-size: 17px; color: #3a50b0; letter-spacing: -.5px; }
.s-dollar { font-weight: bold; font-size: 26px; color: #d84848; text-decoration: line-through; text-shadow: 1px 1px 1px #999; }
.s-num { font: 15.5px "DejaVu Sans", sans-serif; }
.s-cn { font-size: 20px; }
.s-day { background: #f8f8f8; border-top: 1px solid #aaa; border-left: 2px solid #aaa; box-sizing: border-box; }

/* status bar */
.status {
  flex: none;
  height: 37px;
  box-sizing: border-box;
  background: #f2f2f2;
  color: #222;
  display: grid;
  grid-template-columns: 22px 54px 102px 75px 86px 94px 53px 96px 82px 86px 97px 52px 95px 82px 86px 97px 76px 90px;
  align-items: center;
  padding-left: 3px;
  white-space: nowrap;
}
.st-icon {
  width: 20px;
  height: 25px;
  box-sizing: border-box;
  border-radius: 3px;
  background: #f0b030;
  border: 4px solid #e8a020;
  box-shadow: inset 0 0 0 2px #ffe080;
}
.st-cn { font-size: 24px; }
.st-r { color: #f01010; font-size: 20.5px; }
.st-k { color: #111; font-size: 20.5px; }
.st-k em { font-size: 24px; color: #333; }
.st-total { border-left: 1px solid #aaa; padding-left: 3px; line-height: 32px; }

/* watermark */
.watermark {
  position: absolute;
  left: 1361px;
  top: 1314px;
  width: 799px;
  height: 81px;
  background: rgba(127, 172, 217, .985);
  display: flex;
  align-items: center;
  white-space: nowrap;
}
.wm-cn { margin-left: 18px; font: 900 55px "Noto Sans CJK SC", sans-serif; color: #10108c; line-height: 1; width: 275px; }
.wm-logo { margin-left: 24px; flex: none; }
.wm-tiny { font-size: 9px; fill: #fff; }
.wm-url { margin-left: 22px; font: bold 54px "DejaVu Serif", serif; color: #fff; letter-spacing: -1px; }
</style>
